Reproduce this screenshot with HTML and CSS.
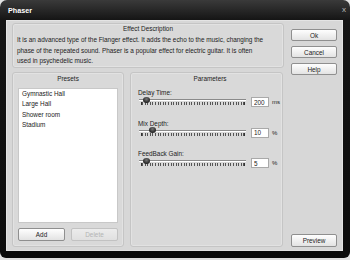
FILE: index.html
```html
<!DOCTYPE html>
<html lang="en">
<head>
    <meta charset="UTF-8">
    <meta name="viewport" content="width=device-width, initial-scale=1.0">
    <title>Phaser</title>
    <link rel="stylesheet" href="styles.css">
</head>
<body>
    <div class="window">
        <div class="titlebar">
            <span class="title">Phaser</span>
            <span class="close">x</span>
        </div>
        <div class="client">
            <div class="main">
                <div class="panel desc">
                    <div class="panel-head">Effect Description</div>
                    <p class="desc-text">It is an advanced type of the Flanger effect. It adds the echo to the music, changing the<br>phase of the repeated sound. Phaser is a popular effect for electric guitar. It is often<br>used in psychedelic music.</p>
                </div>
                <div class="lower">
                    <div class="panel presets">
                        <div class="panel-head">Presets</div>
                        <ul class="preset-list">
                            <li>Gymnastic Hall</li>
                            <li>Large Hall</li>
                            <li>Shower room</li>
                            <li>Stadium</li>
                        </ul>
                        <div class="preset-buttons">
                            <button type="button" class="btn">Add</button>
                            <button type="button" class="btn" disabled>Delete</button>
                        </div>
                    </div>
                    <div class="panel params">
                        <div class="panel-head">Parameters</div>
                        <div class="param">
                            <label class="param-label">Delay Time:</label>
                            <div class="param-row">
                                <div class="slider">
                                    <div class="track"></div>
                                    <div class="ticks"></div>
                                    <div class="thumb" style="left: 4%;"></div>
                                </div>
                                <input type="text" class="value" value="200">
                                <span class="unit">ms</span>
                            </div>
                        </div>
                        <div class="param">
                            <label class="param-label">Mix Depth:</label>
                            <div class="param-row">
                                <div class="slider">
                                    <div class="track"></div>
                                    <div class="ticks"></div>
                                    <div class="thumb" style="left: 9.5%;"></div>
                                </div>
                                <input type="text" class="value" value="10">
                                <span class="unit">%</span>
                            </div>
                        </div>
                        <div class="param">
                            <label class="param-label">FeedBack Gain:</label>
                            <div class="param-row">
                                <div class="slider">
                                    <div class="track"></div>
                                    <div class="ticks"></div>
                                    <div class="thumb" style="left: 4%;"></div>
                                </div>
                                <input type="text" class="value" value="5">
                                <span class="unit">%</span>
                            </div>
                        </div>
                    </div>
                </div>
            </div>
            <div class="side">
                <button type="button" class="btn side-btn">Ok</button>
                <button type="button" class="btn side-btn">Cancel</button>
                <button type="button" class="btn side-btn">Help</button>
                <button type="button" class="btn side-btn preview">Preview</button>
            </div>
        </div>
    </div>
</body>
</html>
```
FILE: styles.css
```css
* {
    box-sizing: border-box;
}
body {
    margin: 0;
    padding: 0;
    background-color: #e2e2e2;
    font-family: "Liberation Sans", Arial, sans-serif;
    font-size: 6.4px;
    color: #222;
}
.window {
    width: 350px;
    height: 258px;
    padding: 0 7px 7px 6px;
    display: flex;
    flex-direction: column;
    background: linear-gradient(#3a3a3a, #151515 20px, #0c0c0c);
    border-radius: 7px 7px 6px 6px;
}
.titlebar {
    height: 20px;
    display: flex;
    align-items: center;
    justify-content: space-between;
    padding: 0 0 0 2px;
}
.title {
    color: #fff;
    font-weight: bold;
    font-size: 7.2px;
}
.close {
    color: #bbb;
    font-size: 8px;
    margin-right: -3px;
    margin-top: -1px;
}
.client {
    flex: 1;
    display: flex;
    gap: 7px;
    padding: 3px 6px 4px 6px;
    background-color: #d7d7d7;
    box-shadow: inset 0 0 0 1px #e4e4e4;
}
.main {
    width: 272px;
    display: flex;
    flex-direction: column;
}
.panel {
    background-color: #d9d9d9;
    border: 1px solid #c5c5c5;
    border-radius: 3px;
    box-shadow: inset 0 0 0 1px #e2e2e2;
}
.panel-head {
    height: 12px;
    line-height: 12px;
    text-align: center;
}
.desc {
    height: 45px;
}
.desc .panel-head {
    height: 10px;
    line-height: 10px;
}
.desc-text {
    margin: 1px 0 0 4px;
    line-height: 10.6px;
    white-space: nowrap;
}
.lower {
    flex: 1;
    display: flex;
    gap: 6px;
    margin-top: 4px;
}
.presets {
    width: 112px;
    display: flex;
    flex-direction: column;
    padding: 0 5px 5px 5px;
}
.preset-list {
    flex: 1;
    list-style: none;
    margin: 3px 0 0 0;
    padding: 0 0 0 3px;
    background-color: #fff;
    border: 1px solid #c8c8c8;
    line-height: 10.3px;
}
.preset-buttons {
    display: flex;
    justify-content: space-between;
    margin-top: 5px;
}
.btn {
    height: 13px;
    padding: 0;
    font-family: "Liberation Sans", Arial, sans-serif;
    font-size: 6.4px;
    color: #222;
    background: linear-gradient(#fefefe, #e3e3e3);
    border: 1px solid #8f8f8f;
    border-radius: 2px;
}
.preset-buttons .btn {
    width: 47px;
}
.btn:disabled {
    color: #b4b4b4;
    background: linear-gradient(#ececec, #e0e0e0);
    border-color: #c2c2c2;
}
.params {
    flex: 1;
    margin-right: 1px;
    padding: 0 0 0 7px;
}
.param {
    display: flow-root;
    height: 30.5px;
}
.param-label {
    display: block;
    line-height: 10px;
    margin-top: 3px;
    margin-bottom: -3px;
}
.param-row {
    display: flex;
    align-items: flex-start;
    height: 20px;
}
.slider {
    position: relative;
    width: 107px;
    height: 12px;
    margin-left: 1px;
}
.track {
    margin-top: 4px;
    height: 2px;
    border-top: 1px solid #8a8a8a;
    border-bottom: 1px solid #fff;
}
.ticks {
    margin: 1px 1px 0 2px;
    height: 3px;
    background: repeating-linear-gradient(90deg, #555 0, #555 1px, transparent 1px, transparent 2.6px);
    border-left: 1px solid #333;
    border-right: 1px solid #333;
}
.thumb {
    position: absolute;
    top: 1.5px;
    width: 7px;
    height: 6px;
    border-radius: 50%;
    background: radial-gradient(circle at 50% 35%, #777, #222 70%);
}
.value {
    width: 18px;
    height: 10px;
    margin: 2px 0 0 5px;
    padding: 0 0 0 2px;
    border: 1px solid #a9a9a9;
    font-family: "Liberation Sans", Arial, sans-serif;
    font-size: 6.4px;
    color: #222;
}
.unit {
    margin: 4px 0 0 3px;
    font-size: 6px;
}
.side {
    width: 46px;
    display: flex;
    flex-direction: column;
    gap: 5px;
    padding-top: 6px;
}
.side-btn {
    height: 12px;
    width: 46px;
}
.preview {
    margin-top: auto;
    height: 13px;
}
```
